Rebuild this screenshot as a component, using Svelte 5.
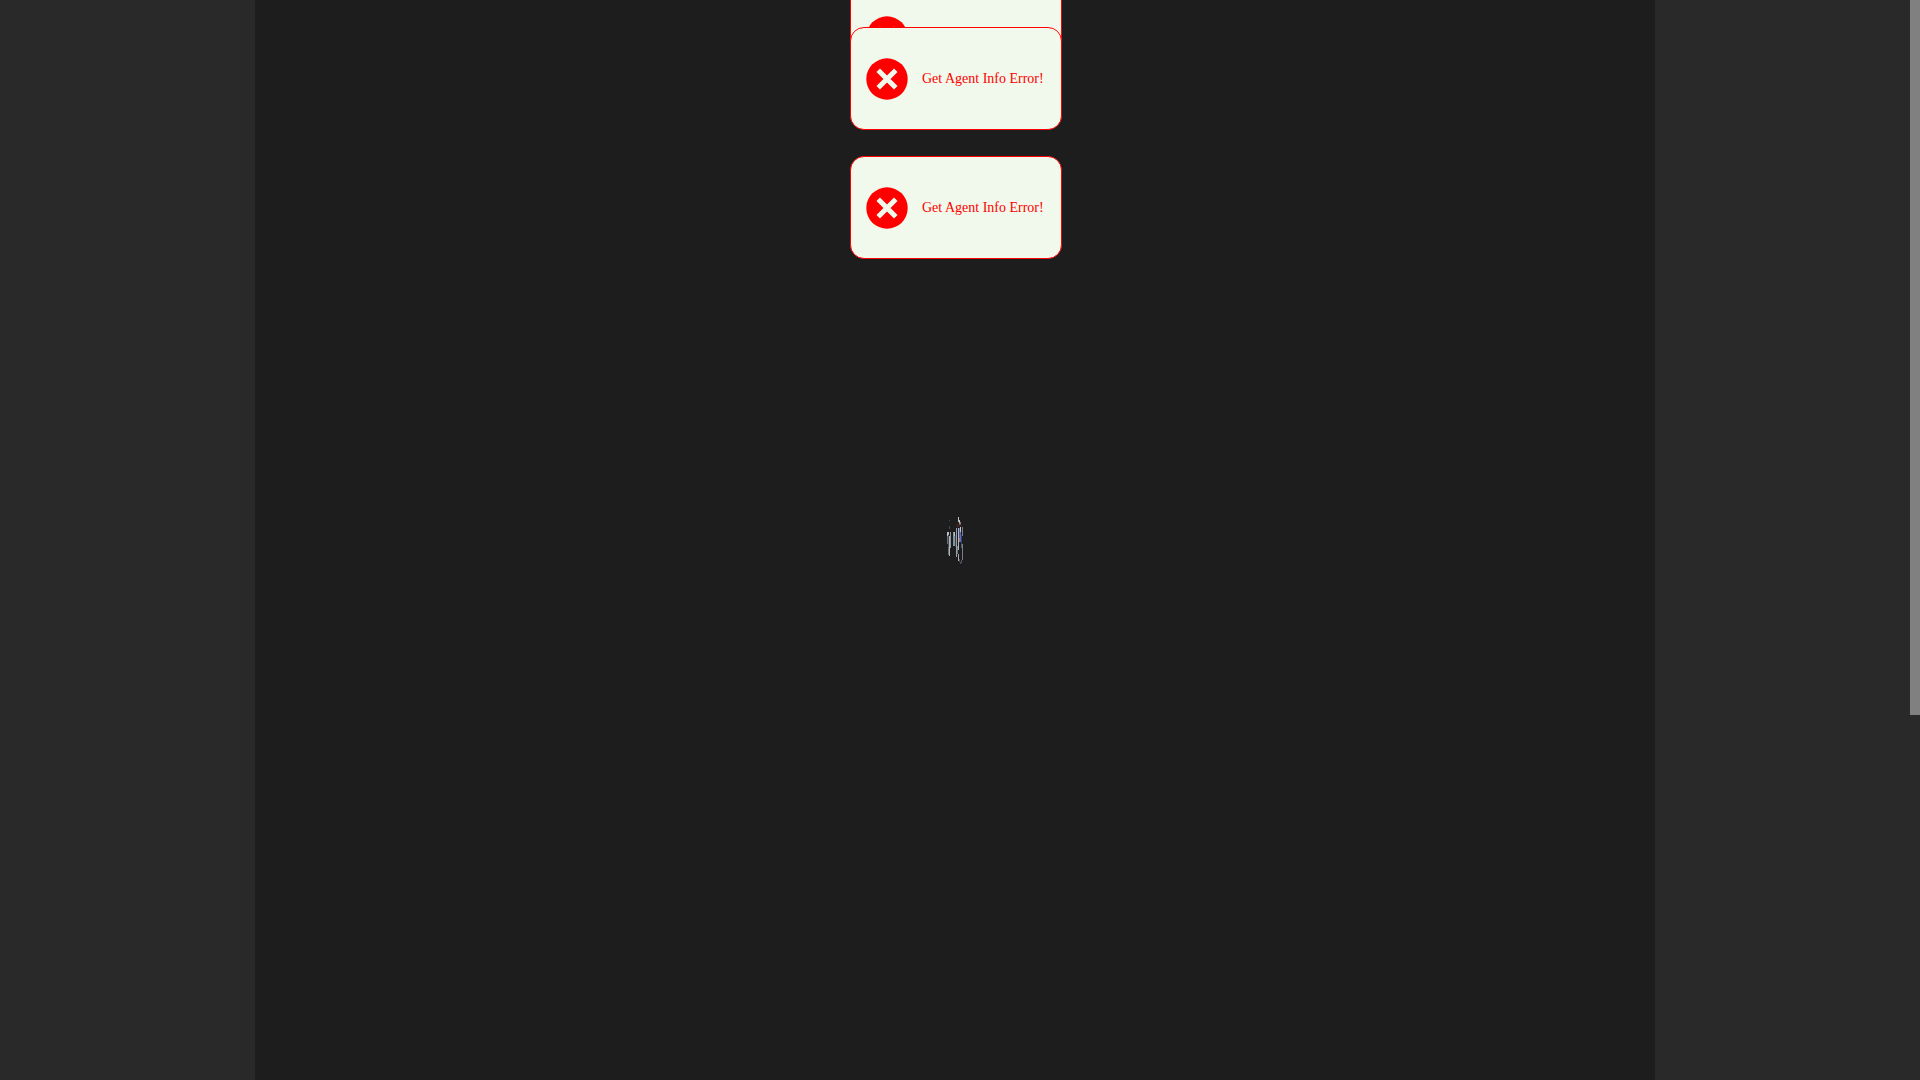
<script lang="ts">
  interface Toast {
    id: number;
    text: string;
    leaving: boolean;
  }

  const toasts: Toast[] = [
    { id: 1, text: "Get Agent Info Error!", leaving: true },
    { id: 2, text: "Get Agent Info Error!", leaving: false },
    { id: 3, text: "Get Agent Info Error!", leaving: false },
  ];
</script>

<div class="page">
  <main class="content">
    <!-- loading logo, seen almost edge-on while it spins -->
    <svg class="loader" viewBox="0 0 54 144" role="img" aria-label="Loading">
      <g fill="none" stroke-width="3">
        <path d="M10.5 12v3M10.5 30v9" stroke="#444a4e" />
        <path d="M37.5 3v15M40.5 12v9" stroke="#b9c0c6" />
        <path d="M40.5 21v6" stroke="#a98a4c" />
        <path d="M43.5 18v9" stroke="#8b7f72" />
        <path d="M34 33v-5h10v5" stroke="#432229" stroke-width="5" />
        <path d="M4.5 48v12M7.5 48v9" stroke="#b3bec6" />
        <path d="M4.5 60v24M7.5 93v24" stroke="#65717a" />
        <path d="M13.5 48v48" stroke="#8a979f" />
        <path d="M10.5 60v60" stroke="#aab4ba" />
        <path d="M7.5 57v36" stroke="#3f474d" />
        <path d="M22.5 48v42M25.5 60v30" stroke="#8196a1" />
        <path d="M25.5 48v12" stroke="#b1bcc3" />
        <path d="M31.5 36v87" stroke="#96a1a8" />
        <path d="M28.5 57v36" stroke="#39434a" />
        <path d="M37.5 36v66" stroke="#aeb8be" />
        <path d="M34.5 90v24" stroke="#6b757c" />
        <path d="M40.5 36v42" stroke="#46529a" />
        <path d="M40.5 66v12" stroke="#a3706f" />
        <path d="M43.5 33v15" stroke="#c2c9d4" />
        <path d="M43.5 48v30" stroke="#5f6fae" />
        <path d="M46.5 57v27" stroke="#353f79" />
        <path d="M37.5 114v21" stroke="#a2abb1" />
        <path d="M40.5 129v9M43.5 138v6" stroke="#4d4f65" />
        <path d="M49.5 33v27M49.5 84v48" stroke="#777f8c" />
        <path d="M46.5 84v12M46.5 132v9" stroke="#555a6c" />
      </g>
    </svg>
  </main>
  <div class="scrollbar"><div class="thumb"></div></div>

  <div class="toasts">
    {#each toasts as toast (toast.id)}
      <div class="toast" class:leaving={toast.leaving} role="alert">
        <svg class="icon" viewBox="0 0 48 48" aria-hidden="true">
          <circle cx="24" cy="24" r="20.7" fill="#f00" />
          <path d="M15.2 15.2l17.6 17.6M32.8 15.2L15.2 32.8" stroke="#f0f9eb" stroke-width="5" />
        </svg>
        <span>{toast.text}</span>
      </div>
    {/each}
  </div>
</div>

<style>
  :global(body) {
    background: #292929;
  }

  .page {
    position: relative;
    display: grid;
    grid-template-columns: 1fr 10px;
    height: 100vh;
    overflow: hidden;
    font-family: "Liberation Serif", "Times New Roman", serif;
  }

  .content {
    display: flex;
    align-items: center;
    justify-content: center;
    width: 100%;
    max-width: 1400px;
    margin: 0 auto;
    background: #1d1d1d;
  }

  .loader {
    width: 18px;
    height: 48px;
  }

  .thumb {
    height: 66.2%;
    background: #808080;
  }

  /* Toasts float over the content column, clear of the scrollbar */
  .toasts {
    position: absolute;
    top: 0;
    left: 0;
    right: 8px;
    display: flex;
    flex-direction: column;
    align-items: center;
    gap: 26px;
    padding-top: 27px;
  }

  .toast {
    position: relative;
    display: flex;
    align-items: center;
    gap: 11px;
    box-sizing: border-box;
    min-width: 212px;
    height: 103px;
    padding: 0 12px;
    border: 1px solid #f00;
    border-radius: 14px;
    background: #f0f9eb;
    color: #f00;
    font-size: 14px;
    white-space: nowrap;
  }

  .toast.leaving {
    position: absolute;
    top: -15px;
  }

  .icon {
    width: 48px;
    height: 48px;
  }
</style>
